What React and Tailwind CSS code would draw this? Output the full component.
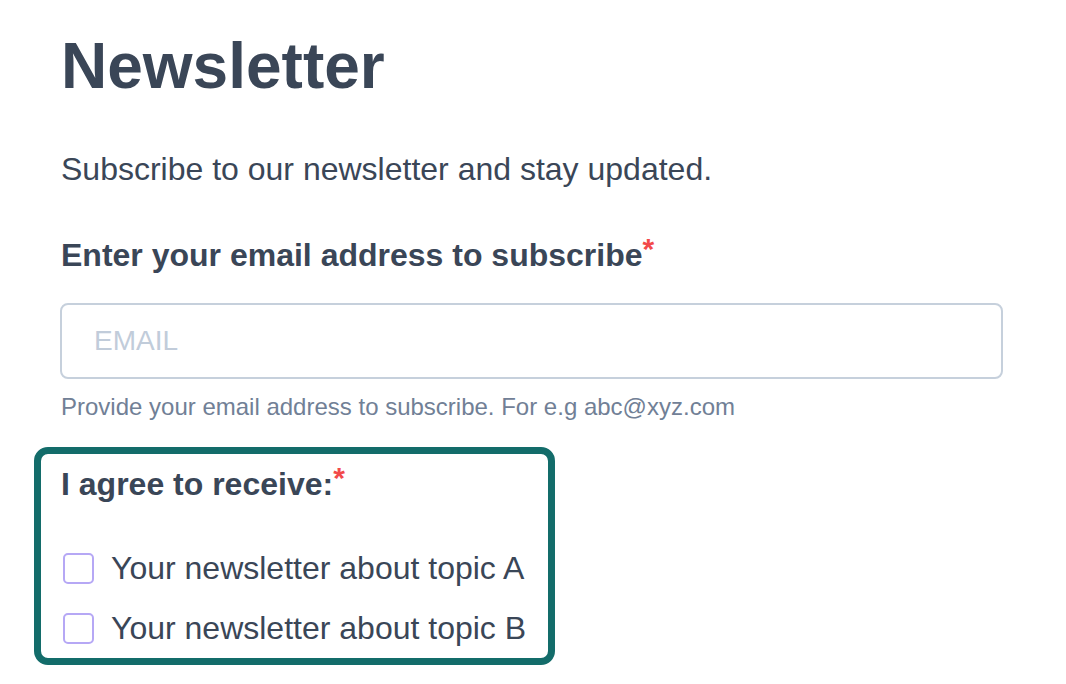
export default function App() {
  const font = { fontFamily: '"Liberation Sans", Arial, Helvetica, sans-serif' };
  return (
    <div className="w-[1066px] h-[684px] bg-white overflow-hidden" style={font}>
      <div className="pl-[61px] pt-[34px] flex flex-col items-start">
        <h1 className="text-[64px] leading-[64px] font-bold text-[#3a4657]">Newsletter</h1>
        <p className="mt-[55px] text-[32px] leading-[32px] text-[#3a4657]">
          Subscribe to our newsletter and stay updated.
        </p>
        <label className="mt-[54px] text-[32px] leading-[32px] font-bold text-[#3a4657]">
          Enter your email address to subscribe
          <span className="relative -top-[7px] text-[30px] leading-[0] text-[#f24a4a]">*</span>
        </label>
        <input
          type="email"
          placeholder="EMAIL"
          className="-ml-px mt-[32px] w-[943px] h-[76px] border-2 border-[#c6d0dc] rounded-[8px] px-[32px] text-[28px] text-[#3a4657] placeholder:text-[#c1ccda] outline-none bg-white"
          style={font}
        />
        <p className="mt-[16px] text-[24px] leading-[24px] text-[#718096]">
          Provide your email address to subscribe. For e.g abc@xyz.com
        </p>
        <div className="mt-[28px] -ml-[27px] border-[7px] border-[#136c6a] rounded-[14px] pl-[20px] pr-[22px] pt-[14px] pb-[14px] flex flex-col">
          <div className="text-[32px] leading-[32px] font-bold text-[#3a4657]">
            I agree to receive:
            <span className="relative -top-[7px] text-[30px] leading-[0] text-[#f24a4a]">*</span>
          </div>
          <div className="mt-[52px] flex flex-col gap-[28px]">
            {["Your newsletter about topic A", "Your newsletter about topic B"].map((t) => (
              <label key={t} className="flex items-center h-[32px]">
                <span className="ml-[2px] w-[31px] h-[31px] border-2 border-[#b6a8f5] rounded-[5px] bg-white shrink-0" />
                <span className="ml-[17px] text-[32px] leading-[32px] text-[#3a4657]">{t}</span>
              </label>
            ))}
          </div>
        </div>
      </div>
    </div>
  );
}
